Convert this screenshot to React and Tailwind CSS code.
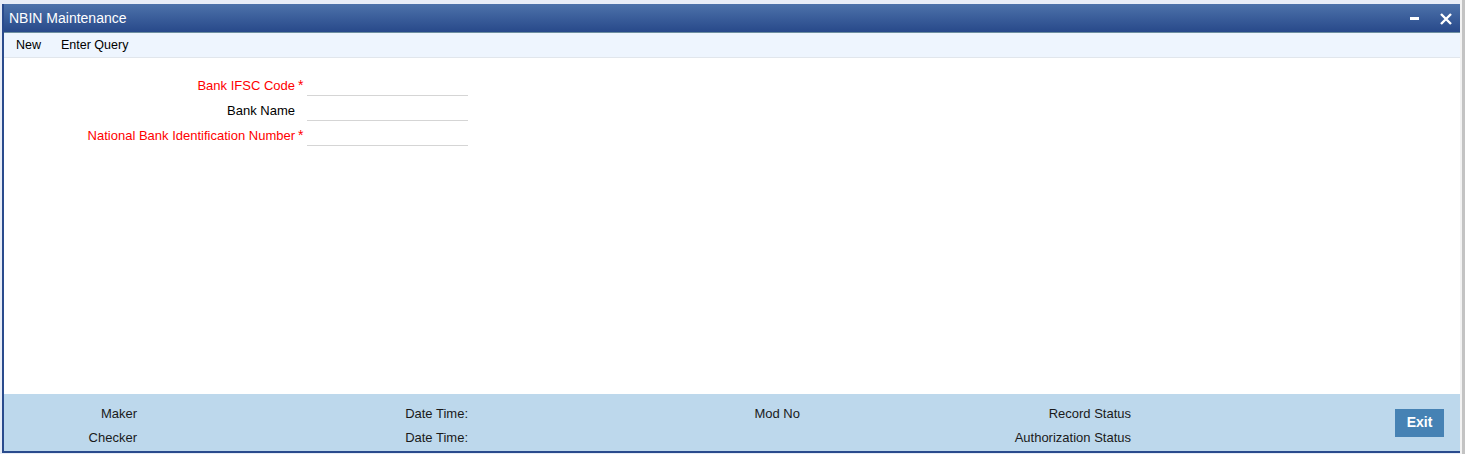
import React from 'react'

const fields = [
  { label: 'Bank IFSC Code', required: true },
  { label: 'Bank Name', required: false },
  { label: 'National Bank Identification Number', required: true },
]

function Field({ label, required }) {
  return (
    <div className="flex items-end h-[25px]">
      <div className={`w-[291px] text-right pb-[3px] leading-[15px] ${required ? 'text-[#ff0000]' : 'text-black'}`}>{label}</div>
      <div className="w-[12px] pb-[3px] pl-[3px] leading-[15px] text-[#ff0000] text-[14px]">{required ? '*' : ''}</div>
      <div className="w-[161px] h-[13px] border-b border-[#d5d5d5]"></div>
    </div>
  )
}

export default function App() {
  return (
    <div className="h-[454px] w-full flex bg-[#e8edf7] text-[13px] font-['Liberation_Sans',Arial,sans-serif] overflow-hidden">
      <div className="flex-1 mt-[4px] ml-[2px] mb-[1px] flex flex-col border-l-2 border-b-2 border-[#2a4b8d] bg-white">
        <div className="h-[29px] flex items-center justify-between bg-gradient-to-b from-[#4d72aa] to-[#28498a] border-b border-[#6e8fa0] pl-[5px] pr-[8px]">
          <span className="text-white text-[14px]">NBIN Maintenance</span>
          <div className="flex items-center gap-[21px]">
            <span className="block w-[9px] h-[3px] bg-white mt-[1px]"></span>
            <svg width="12" height="12" viewBox="0 0 12 12" className="mt-[1px]">
              <path d="M1 1 L11 11 M11 1 L1 11" stroke="white" strokeWidth="2.4" />
            </svg>
          </div>
        </div>
        <div className="h-[25px] flex items-center gap-[20px] bg-[#eef5fe] border-b border-[#e1e6ec] pl-[12px] text-[12.5px]">
          <span>New</span>
          <span>Enter Query</span>
        </div>
        <div className="flex-1 pt-[13px]">
          {fields.map((f) => (
            <Field key={f.label} {...f} />
          ))}
        </div>
        <div className="h-[57px] bg-[#bdd8ec] flex text-[#1a1a1a] pr-[16px] leading-[15px]">
          <div className="w-[133px] flex flex-col items-end gap-[9px] pt-[12px]">
            <span>Maker</span>
            <span>Checker</span>
          </div>
          <div className="w-[331px] flex flex-col items-end gap-[9px] pt-[12px]">
            <span>Date Time:</span>
            <span>Date Time:</span>
          </div>
          <div className="w-[332px] flex flex-col items-end gap-[9px] pt-[12px]">
            <span>Mod No</span>
          </div>
          <div className="w-[331px] flex flex-col items-end gap-[9px] pt-[12px]">
            <span>Record Status</span>
            <span>Authorization Status</span>
          </div>
          <div className="flex-1 flex justify-end items-center">
            <button className="w-[49px] h-[28px] bg-[#4682b4] text-white font-bold text-[14px]">Exit</button>
          </div>
        </div>
      </div>
      <div className="w-[2px] bg-[#f2f2f2]"></div>
      <div className="w-[3px] bg-[#c3c3c3]"></div>
    </div>
  )
}
